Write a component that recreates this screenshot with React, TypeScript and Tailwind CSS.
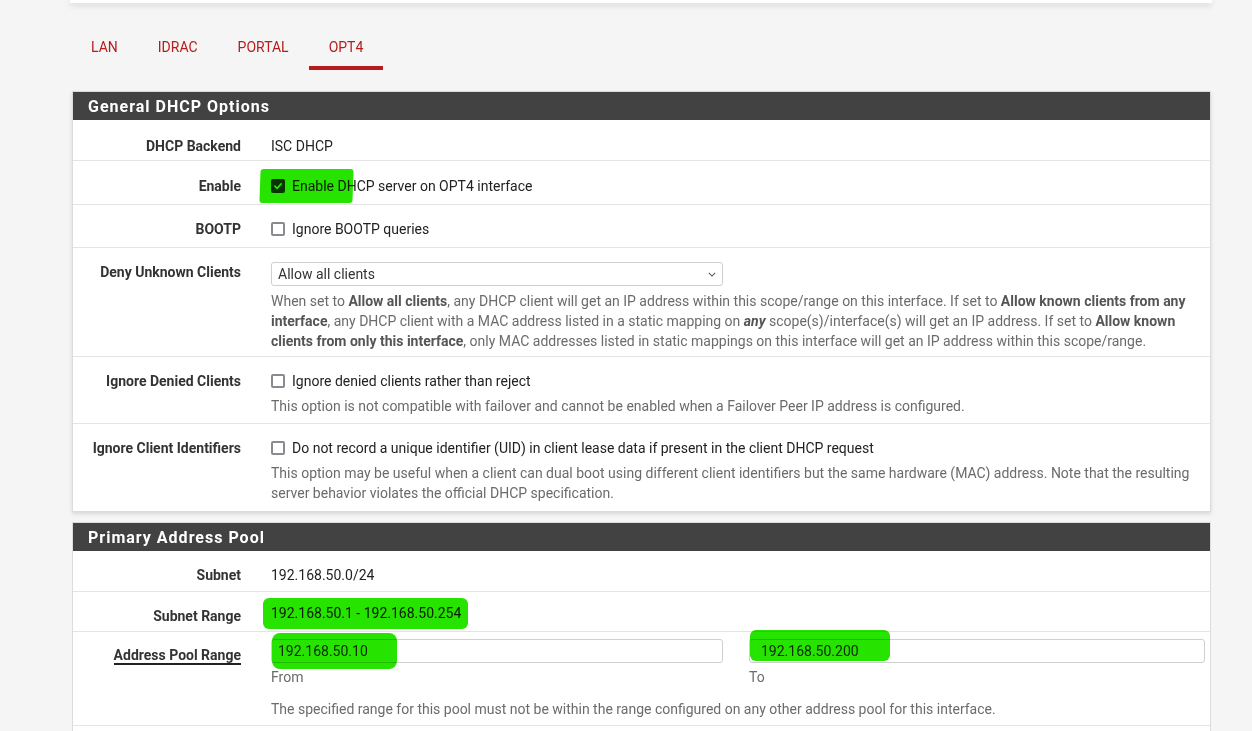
import React from "react";

const font = { fontFamily: "Roboto, 'Noto Sans', sans-serif" };

function Check({ checked }: { checked?: boolean }) {
  if (checked) {
    return (
      <span className="inline-flex h-[14px] w-[14px] shrink-0 items-center justify-center rounded-[2px] bg-[#2f3a2f]">
        <svg viewBox="0 0 12 12" className="h-[10px] w-[10px]">
          <path d="M2.2 6.2 L4.9 8.8 L9.8 3.4" fill="none" stroke="#fff" strokeWidth="2" strokeLinecap="round" strokeLinejoin="round" />
        </svg>
      </span>
    );
  }
  return <span className="inline-block h-[14px] w-[14px] shrink-0 rounded-[2px] border-2 border-[#8a8a90] bg-white" />;
}

function Row({ label, children, pt = "pt-[14px]", lt = "pt-[14px]", pb = "pb-[7px]" }: { label: string; children: React.ReactNode; pt?: string; lt?: string; pb?: string }) {
  return (
    <div className={`flex border-b border-[#e4e4e4] ${pb}`}>
      <div className={`w-[168px] shrink-0 ${lt} text-right text-[14px] leading-[20px] font-bold text-[#333]`}>{label}</div>
      <div className={`ml-[30px] flex-1 pr-[16px] ${pt}`}>{children}</div>
    </div>
  );
}

function Desc({ children }: { children: React.ReactNode }) {
  return <div className="mt-[5px] text-[14px] leading-[20px] text-[#6b6b6b]">{children}</div>;
}

function CheckLine({ checked, text }: { checked?: boolean; text: string }) {
  return (
    <div className="flex h-[20px] items-center gap-[7px] text-[14px] text-[#222]">
      <Check checked={checked} />
      <span>{text}</span>
    </div>
  );
}

function Header({ title }: { title: string }) {
  return (
    <div className="flex h-[28px] items-center bg-[#424242] pl-[15px] pt-[1px] text-[16px] font-bold tracking-[1px] text-white">
      {title}
    </div>
  );
}

function Mark({ className }: { className: string }) {
  return <div className={`pointer-events-none absolute bg-[#26e400] mix-blend-multiply ${className}`} />;
}

export default function App() {
  return (
    <div style={font} className="relative min-h-[731px] overflow-hidden bg-[#f5f5f5]">
      <div className="mx-[70px] h-[3px] w-[1142px] bg-white shadow-[0_2px_6px_rgba(0,0,0,0.18)]" />

      <div className="ml-[72px] w-[1139px]">
        <div className="-ml-[1px] mt-[27px] flex h-[40px] text-[14px] text-[#b71c1c]">
          {["LAN", "IDRAC", "PORTAL", "OPT4"].map((t) => (
            <div key={t} className={`flex h-full items-start px-[20px] pt-[7px] ${t === "OPT4" ? "border-b-4 border-[#b71c1c]" : ""}`}>
              {t}
            </div>
          ))}
        </div>

        <div className="mt-[21px] border border-[#dcdcdc] bg-white shadow-[0_2px_4px_rgba(0,0,0,0.12)]">
          <Header title="General DHCP Options" />
          <Row label="DHCP Backend" pt="pt-[16px]" lt="pt-[16px]" pb="pb-[4px]">
            <div className="text-[14px] leading-[20px] text-[#222]">ISC DHCP</div>
          </Row>
          <Row label="Enable" pt="pt-[15px]" lt="pt-[15px]" pb="pb-[8px]">
            <CheckLine checked text="Enable DHCP server on OPT4 interface" />
          </Row>
          <Row label="BOOTP" pb="pb-[8px]">
            <CheckLine text="Ignore BOOTP queries" />
          </Row>
          <Row label="Deny Unknown Clients" pb="pb-[5px]">
            <div className="flex h-[24px] w-[452px] items-center justify-between rounded-[3px] border border-[#cfcfcf] pl-[6px] pr-[6px] text-[14px] text-[#333]">
              <span>Allow all clients</span>
              <svg viewBox="0 0 10 6" className="h-[5px] w-[8px]">
                <path d="M1 1 L5 5 L9 1" fill="none" stroke="#555" strokeWidth="1.3" />
              </svg>
            </div>
            <Desc>
              When set to <b className="text-[#555]">Allow all clients</b>, any DHCP client will get an IP address within this scope/range on this interface. If set to{" "}
              <b className="text-[#555]">Allow known clients from any interface</b>, any DHCP client with a MAC address listed in a static mapping on{" "}
              <b className="italic text-[#555]">any</b> scope(s)/interface(s) will get an IP address. If set to{" "}
              <b className="text-[#555]">Allow known clients from only this interface</b>, only MAC addresses listed in static mappings on this interface will get an IP address within this scope/range.
            </Desc>
          </Row>
          <Row label="Ignore Denied Clients" pb="pb-[7px]">
            <CheckLine text="Ignore denied clients rather than reject" />
            <Desc>This option is not compatible with failover and cannot be enabled when a Failover Peer IP address is configured.</Desc>
          </Row>
          <div className="[&>div]:border-b-0">
            <Row label="Ignore Client Identifiers" pb="pb-[8px]">
              <CheckLine text="Do not record a unique identifier (UID) in client lease data if present in the client DHCP request" />
              <Desc>
                This option may be useful when a client can dual boot using different client identifiers but the same hardware (MAC) address. Note that the resulting server behavior violates the official DHCP specification.
              </Desc>
            </Row>
          </div>
        </div>

        <div className="mt-[10px] border border-[#dcdcdc] bg-white">
          <Header title="Primary Address Pool" />
          <Row label="Subnet" pb="pb-[6px]">
            <div className="text-[14px] leading-[20px] text-[#222]">192.168.50.0/24</div>
          </Row>
          <Row label="Subnet Range" pt="pt-[11px]" pb="pb-[5px]">
            <div className="text-[14px] leading-[20px] text-[#222]">192.168.50.1 - 192.168.50.254</div>
          </Row>
          <div className="flex border-b border-[#e4e4e4] pb-[6px]">
            <div className="w-[168px] shrink-0 pt-[13px] text-right text-[14px] leading-[20px] font-bold text-[#333]">
              <span className="border-b-2 border-[#222]">Address Pool Range</span>
            </div>
            <div className="ml-[30px] flex-1 pr-[5px] pt-[7px]">
              <div className="flex gap-[26px]">
                <div className="w-[452px]">
                  <div className="flex h-[24px] items-center rounded-[3px] border border-[#cfcfcf] pl-[6px] text-[14px] text-[#333]">192.168.50.10</div>
                  <div className="mt-[4px] text-[14px] leading-[20px] text-[#6b6b6b]">From</div>
                </div>
                <div className="flex-1">
                  <div className="flex h-[24px] items-center rounded-[3px] border border-[#cfcfcf] pl-[11px] text-[14px] text-[#333]">192.168.50.200</div>
                  <div className="mt-[4px] text-[14px] leading-[20px] text-[#6b6b6b]">To</div>
                </div>
              </div>
              <div className="mt-[12px] text-[14px] leading-[20px] text-[#6b6b6b]">
                The specified range for this pool must not be within the range configured on any other address pool for this interface.
              </div>
            </div>
          </div>
          <div className="h-[20px]" />
        </div>
      </div>

      <Mark className="left-[260px] top-[169px] h-[34px] w-[93px] rounded-[3px] -skew-x-2" />
      <Mark className="left-[263px] top-[598px] h-[31px] w-[205px] rounded-[6px]" />
      <Mark className="left-[272px] top-[633px] h-[36px] w-[125px] rounded-[8px]" />
      <Mark className="left-[750px] top-[630px] h-[31px] w-[140px] rounded-[6px]" />
    </div>
  );
}
